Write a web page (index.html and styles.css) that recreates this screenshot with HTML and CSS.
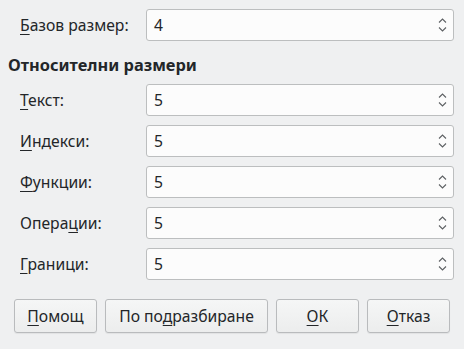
FILE: index.html
```html
<!DOCTYPE html>
<html lang="bg">
<head>
<meta charset="utf-8">
<link rel="stylesheet" href="styles.css">
</head>
<body>
<div class="dialog">
  <div class="row">
    <label class="label"><u>Б</u>азов размер:</label>
    <div class="spin"><span class="value">4</span>
      <svg class="arrows" width="9" height="16" viewBox="0 0 9 16"><polyline points="1,5.5 4.5,2 8,5.5"/><polyline points="1,10.5 4.5,14 8,10.5"/></svg>
    </div>
  </div>
  <div class="heading">Относителни размери</div>
  <div class="rows">
    <div class="row">
      <label class="label"><u>Т</u>екст:</label>
      <div class="spin"><span class="value">5</span>
        <svg class="arrows" width="9" height="16" viewBox="0 0 9 16"><polyline points="1,5.5 4.5,2 8,5.5"/><polyline points="1,10.5 4.5,14 8,10.5"/></svg>
      </div>
    </div>
    <div class="row">
      <label class="label"><u>И</u>ндекси:</label>
      <div class="spin"><span class="value">5</span>
        <svg class="arrows" width="9" height="16" viewBox="0 0 9 16"><polyline points="1,5.5 4.5,2 8,5.5"/><polyline points="1,10.5 4.5,14 8,10.5"/></svg>
      </div>
    </div>
    <div class="row">
      <label class="label"><u>Ф</u>ункции:</label>
      <div class="spin"><span class="value">5</span>
        <svg class="arrows" width="9" height="16" viewBox="0 0 9 16"><polyline points="1,5.5 4.5,2 8,5.5"/><polyline points="1,10.5 4.5,14 8,10.5"/></svg>
      </div>
    </div>
    <div class="row">
      <label class="label">Опера<u>ц</u>ии:</label>
      <div class="spin"><span class="value">5</span>
        <svg class="arrows" width="9" height="16" viewBox="0 0 9 16"><polyline points="1,5.5 4.5,2 8,5.5"/><polyline points="1,10.5 4.5,14 8,10.5"/></svg>
      </div>
    </div>
    <div class="row">
      <label class="label"><u>Г</u>раници:</label>
      <div class="spin"><span class="value">5</span>
        <svg class="arrows" width="9" height="16" viewBox="0 0 9 16"><polyline points="1,5.5 4.5,2 8,5.5"/><polyline points="1,10.5 4.5,14 8,10.5"/></svg>
      </div>
    </div>
  </div>
  <div class="buttons">
    <button class="btn w-small"><u>П</u>омощ</button>
    <button class="btn w-wide">По по<u>д</u>разбиране</button>
    <button class="btn w-small"><u>О</u>К</button>
    <button class="btn w-small"><u>О</u>тказ</button>
  </div>
</div>
</body>
</html>
```
FILE: styles.css
```css
html, body {
  margin: 0;
  padding: 0;
  background: #eff0f1;
}
body {
  width: 464px;
  height: 349px;
  overflow: hidden;
  font-family: "Noto Sans", "DejaVu Sans", sans-serif;
  font-size: 15.7px;
  color: #232629;
}
.dialog {
  padding: 9px 10px 0 8px;
  display: flex;
  flex-direction: column;
}
.rows {
  display: flex;
  flex-direction: column;
  gap: 9px;
}
.row {
  display: grid;
  grid-template-columns: 138px 1fr;
  align-items: center;
  height: 32px;
}
.label {
  padding-left: 12px;
  line-height: 20px;
}
u {
  text-decoration: underline;
  text-decoration-thickness: 1px;
  text-underline-offset: 3px;
}
.spin {
  height: 32px;
  box-sizing: border-box;
  border: 1px solid #bcbebf;
  border-radius: 3px;
  background: #fcfcfc;
  display: flex;
  align-items: center;
  justify-content: space-between;
  padding: 0 6px 0 7px;
}
.value {
  line-height: 20px;
}
.arrows {
  fill: none;
  stroke: #5d6063;
  stroke-width: 1.1;
}
.heading {
  font-weight: bold;
  font-size: 16.4px;
  line-height: 20px;
  margin: 14px 0 9px;
}
.buttons {
  display: flex;
  gap: 8px;
  margin-top: 19px;
  padding-left: 6px;
}
.btn {
  height: 34px;
  box-sizing: border-box;
  border: 1px solid #b9bbbd;
  border-radius: 3px;
  background: linear-gradient(#f5f6f6, #eceded);
  box-shadow: 0 1px 1px rgba(0,0,0,0.06);
  font-family: inherit;
  font-size: 15.7px;
  color: #232629;
  padding: 0;
}
.w-small { width: 83px; }
.w-wide { width: 163px; }
```
